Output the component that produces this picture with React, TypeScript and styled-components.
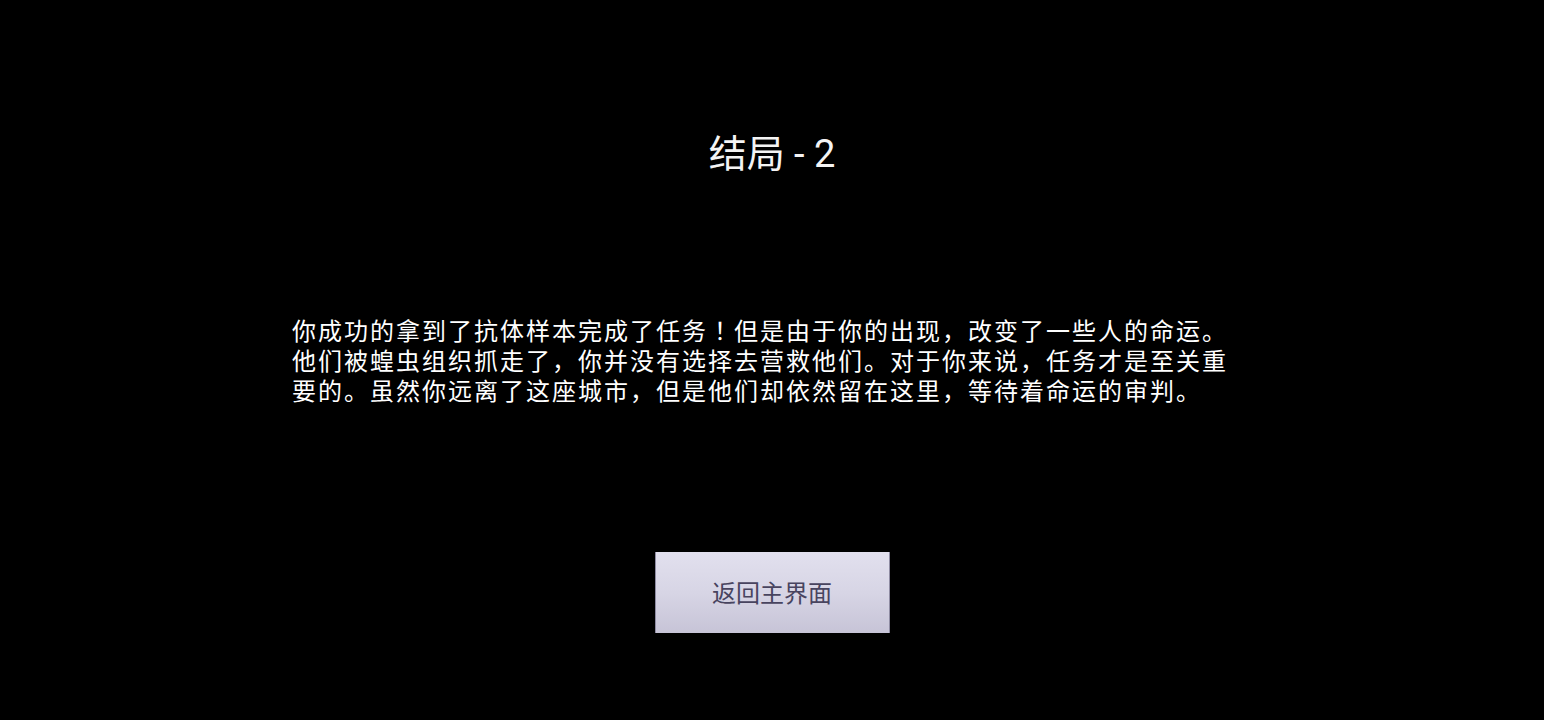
import React from 'react';
import styled, { createGlobalStyle } from 'styled-components';

const GlobalStyle = createGlobalStyle`
  html, body {
    margin: 0;
    padding: 0;
    background: #000;
  }
  body {
    font-family: Roboto, 'Noto Sans CJK SC', sans-serif;
  }
`;

const Screen = styled.main`
  width: 1544px;
  height: 720px;
  background: #000;
  display: flex;
  flex-flow: column nowrap;
  align-items: center;
  padding-top: 131px;
  box-sizing: border-box;
`;

const Title = styled.h1`
  margin: 0;
  font-family: Roboto, 'Noto Sans CJK SC', sans-serif;
  font-size: 38px;
  line-height: 46px;
  font-weight: 400;
  color: #f4f4f4;
`;

const Story = styled.p`
  margin: 138px 0 0;
  width: 960px;
  font-family: 'Noto Sans CJK SC', sans-serif;
  font-size: 24px;
  line-height: 30px;
  letter-spacing: 2px;
  color: #fff;
`;

// full-width exclamation, centred in its cell
const Bang = styled.span`
  font-family: 'Noto Sans CJK JP', sans-serif;
`;

const MenuButton = styled.button`
  margin-top: 147px;
  width: 235px;
  height: 81px;
  border: none;
  border-left: 1px solid #8e8ba2;
  border-right: 1px solid #8e8ba2;
  background: linear-gradient(to bottom, #e2e0ee 0%, #d7d5e5 50%, #c7c4d7 100%);
  color: #48445f;
  font-family: 'Noto Sans CJK SC', sans-serif;
  font-size: 24px;
  cursor: pointer;
  padding: 0 0 2px;
`;

export default function App() {
  return (
    <>
      <GlobalStyle />
      <Screen>
        <Title>结局 - 2</Title>
        <Story>
          你成功的拿到了抗体样本完成了任务<Bang>！</Bang>但是由于你的出现，改变了一些人的命运。他们被蝗虫组织抓走了，你并没有选择去营救他们。对于你来说，任务才是至关重要的。虽然你远离了这座城市，但是他们却依然留在这里，等待着命运的审判。
        </Story>
        <MenuButton>返回主界面</MenuButton>
      </Screen>
    </>
  );
}
